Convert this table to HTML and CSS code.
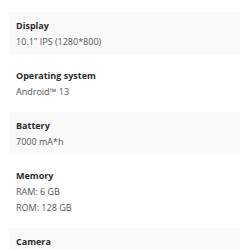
FILE: index.html
```html
<!DOCTYPE html>
<html lang="en">
<head>
  <meta charset="UTF-8">
  <title>Specifications</title>
  <link rel="stylesheet" href="styles.css">
</head>
<body>
  <!-- Spec list -->
  <section class="specs">
    <div class="spec">
      <h3>Display</h3>
      <p>10.1" IPS (1280*800)</p>
    </div>
    <div class="spec">
      <h3>Operating system</h3>
      <p>Android™ 13</p>
    </div>
    <div class="spec">
      <h3>Battery</h3>
      <p>7000 mA*h</p>
    </div>
    <div class="spec">
      <h3>Memory</h3>
      <p>RAM: 6 GB</p>
      <p>ROM: 128 GB</p>
    </div>
    <div class="spec">
      <h3>Camera</h3>
      <p>Front: 5 MP</p>
    </div>
  </section>
</body>
</html>
```

FILE: styles.css
```css
body {
  font-family: "Open Sans", sans-serif;
  margin: 0;
  padding: 0;
  background-color: #fff;
}
.specs {
  padding: 12px 10px 0 9px;
}
.spec {
  padding: 6px 7px 5px;
  margin-bottom: 7px;
}
.spec:nth-child(odd) {
  background-color: #fafafa;
}
.spec h3 {
  font-size: 9px;
  font-weight: 700;
  line-height: 16px;
  color: #2b2b2b;
  margin: 0;
}
.spec p {
  font-size: 9px;
  line-height: 16px;
  color: #555;
  margin: 0;
}
```
